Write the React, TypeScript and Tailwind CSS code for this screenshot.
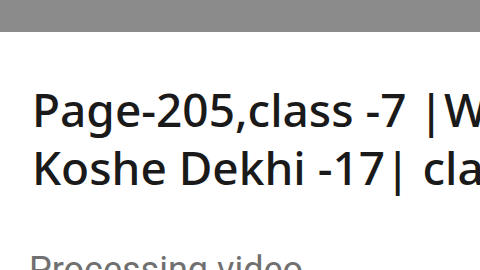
import React from 'react'

export default function App() {
  return (
    <div className="w-[480px] h-[270px] overflow-hidden bg-white">
      <div className="h-[32px] bg-[#8b8b8b]" />
      <div className="pl-[32px] pt-[48px] w-[700px]">
        <h1 className="text-[46px] leading-[58px] font-medium text-[#1a1a1a]" style={{ fontFamily: "'Noto Sans', sans-serif" }}>
          Page-205,class -7 |WBBSE<br />Koshe Dekhi -17| class 7 math
        </h1>
        <p className="mt-[56px] -ml-[3px] text-[36px] leading-[36px] text-[#707070]" style={{ fontFamily: "Roboto, sans-serif" }}>
          Processing video...
        </p>
      </div>
    </div>
  )
}
